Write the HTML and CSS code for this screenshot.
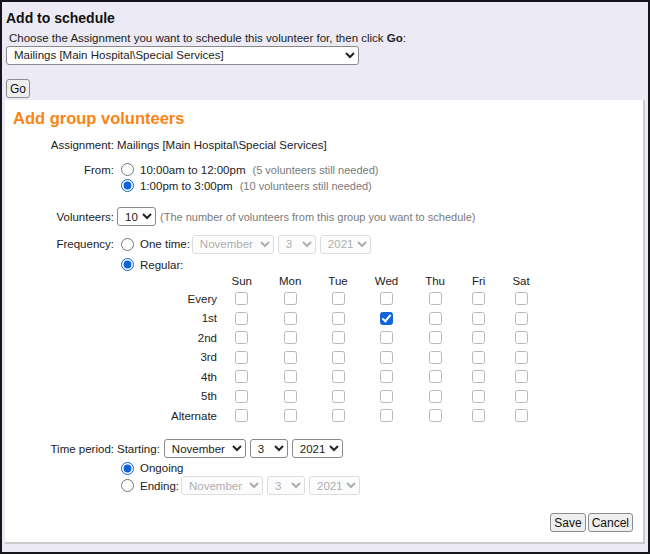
FILE: index.html
```html
<!DOCTYPE html>
<html lang="en">
<head>
    <meta charset="UTF-8">
    <title>Add to schedule</title>
    <link rel="stylesheet" href="styles.css">
</head>
<body>
<div class="frame">
    <!-- Pick the assignment -->
    <div class="top">
        <h1>Add to schedule</h1>
        <p class="intro">Choose the Assignment you want to schedule this volunteer for, then click <b>Go</b>:</p>
        <select class="assign-select"><option>Mailings [Main Hospital\Special Services]</option></select>
        <div class="go-row"><button class="btn">Go</button></div>
    </div>

    <!-- Group volunteers -->
    <div class="panel">
        <h2>Add group volunteers</h2>

        <div class="row row-assign">
            <div class="lbl">Assignment:</div>
            <div class="field">Mailings [Main Hospital\Special Services]</div>
        </div>

        <div class="row row-from">
            <div class="lbl">From:</div>
            <div class="field">
                <label class="opt"><input type="radio" name="shift">10:00am to 12:00pm<span class="hint">(5 volunteers still needed)</span></label>
                <label class="opt"><input type="radio" name="shift" checked>1:00pm to 3:00pm<span class="hint">(10 volunteers still needed)</span></label>
            </div>
        </div>

        <div class="row row-vol">
            <div class="lbl tall">Volunteers:</div>
            <div class="field line">
                <select class="sel-num"><option>10</option></select>
                <span class="hint">(The number of volunteers from this group you want to schedule)</span>
            </div>
        </div>

        <div class="row row-freq">
            <div class="lbl tall">Frequency:</div>
            <div class="field">
                <div class="line">
                    <label class="opt"><input type="radio" name="freq">One time:</label>
                    <select class="sel-month" disabled><option>November</option></select>
                    <select class="sel-day" disabled><option>3</option></select>
                    <select class="sel-year" disabled><option>2021</option></select>
                </div>
                <label class="opt opt-regular"><input type="radio" name="freq" checked>Regular:</label>

                <table class="days">
                    <tr class="head"><td></td><td>Sun</td><td>Mon</td><td>Tue</td><td>Wed</td><td>Thu</td><td>Fri</td><td>Sat</td></tr>
                    <tr><td>Every</td><td><input type="checkbox"></td><td><input type="checkbox"></td><td><input type="checkbox"></td><td><input type="checkbox"></td><td><input type="checkbox"></td><td><input type="checkbox"></td><td><input type="checkbox"></td></tr>
                    <tr><td>1st</td><td><input type="checkbox"></td><td><input type="checkbox"></td><td><input type="checkbox"></td><td><input type="checkbox" checked></td><td><input type="checkbox"></td><td><input type="checkbox"></td><td><input type="checkbox"></td></tr>
                    <tr><td>2nd</td><td><input type="checkbox"></td><td><input type="checkbox"></td><td><input type="checkbox"></td><td><input type="checkbox"></td><td><input type="checkbox"></td><td><input type="checkbox"></td><td><input type="checkbox"></td></tr>
                    <tr><td>3rd</td><td><input type="checkbox"></td><td><input type="checkbox"></td><td><input type="checkbox"></td><td><input type="checkbox"></td><td><input type="checkbox"></td><td><input type="checkbox"></td><td><input type="checkbox"></td></tr>
                    <tr><td>4th</td><td><input type="checkbox"></td><td><input type="checkbox"></td><td><input type="checkbox"></td><td><input type="checkbox"></td><td><input type="checkbox"></td><td><input type="checkbox"></td><td><input type="checkbox"></td></tr>
                    <tr><td>5th</td><td><input type="checkbox"></td><td><input type="checkbox"></td><td><input type="checkbox"></td><td><input type="checkbox"></td><td><input type="checkbox"></td><td><input type="checkbox"></td><td><input type="checkbox"></td></tr>
                    <tr><td>Alternate</td><td><input type="checkbox"></td><td><input type="checkbox"></td><td><input type="checkbox"></td><td><input type="checkbox"></td><td><input type="checkbox"></td><td><input type="checkbox"></td><td><input type="checkbox"></td></tr>
                </table>
            </div>
        </div>

        <div class="row row-period">
            <div class="lbl tall">Time period:</div>
            <div class="field">
                <div class="line">
                    <span class="starting">Starting:</span>
                    <select class="sel-month"><option>November</option></select>
                    <select class="sel-day"><option>3</option></select>
                    <select class="sel-year"><option>2021</option></select>
                </div>
                <label class="opt opt-ongoing"><input type="radio" name="period" checked>Ongoing</label>
                <div class="line">
                    <label class="opt"><input type="radio" name="period">Ending:</label>
                    <select class="sel-month" disabled><option>November</option></select>
                    <select class="sel-day" disabled><option>3</option></select>
                    <select class="sel-year" disabled><option>2021</option></select>
                </div>
            </div>
        </div>

        <div class="actions">
            <button class="btn">Save</button>
            <button class="btn">Cancel</button>
        </div>
    </div>
</div>
</body>
</html>
```

FILE: styles.css
```css
* {
    box-sizing: border-box;
}
body {
    margin: 0;
    font-family: "Liberation Sans", Arial, sans-serif;
    font-size: 11.5px;
    color: #222;
}
.frame {
    height: 554px;
    border: 2px solid #16141d;
    background-color: #eceaf5;
    padding: 0 3px;
    overflow: hidden;
}
.top {
    padding: 8px 0 0 1px;
}
.top h1 {
    margin: 0;
    font-size: 14px;
    line-height: 16px;
    color: #111;
}
.intro {
    margin: 3.5px 0 0 3px;
    line-height: 16px;
    color: #222;
}
select {
    font-family: "Liberation Sans", Arial, sans-serif;
    font-size: 11.5px;
    height: 19px;
    padding: 0 0 0 3px;
    color: #222;
    margin: 0;
    border: 1px solid #8a8a8a;
    border-radius: 3px;
    background-color: #fff;
}
select:disabled {
    color: #8c8c8c;
    border-color: #d0d0d0;
    background-color: #fbfbfb;
}
.assign-select {
    display: block;
    width: 353px;
}
.go-row {
    margin-top: 14.5px;
}
.btn {
    font-family: "Liberation Sans", Arial, sans-serif;
    font-size: 12px;
    height: 19px;
    padding: 0 3px;
    margin: 0;
    color: #111;
    background-color: #efefef;
    border: 1px solid #8d8d8d;
    border-radius: 3px;
}
.panel {
    margin-top: 1.5px;
    background-color: #fff;
    border-right: 2px solid #cbcbcf;
    border-bottom: 2px solid #cbcbcf;
    padding: 9px 0 10px;
}
.panel h2 {
    margin: 0 0 9px 8px;
    font-size: 16.5px;
    line-height: 19px;
    color: #fb8412;
}
.row {
    display: flex;
    align-items: flex-start;
}
.lbl {
    width: 109px;
    text-align: right;
    line-height: 16px;
    color: #222;
}
.lbl.tall {
    line-height: 20px;
}
.field {
    margin-left: 3px;
    line-height: 16px;
}
.line {
    display: flex;
    align-items: center;
    height: 20px;
}
.line select {
    margin-right: 4px;
}
.opt {
    display: flex;
    align-items: center;
    height: 16px;
}
input[type="radio"] {
    width: 13px;
    height: 13px;
    margin: 0 6px 0 4px;
    accent-color: #0f63d6;
}
.hint {
    font-size: 11px;
    color: #7a7a7a;
    margin-left: 7px;
}
.row-vol .hint {
    margin-left: 0;
}
.row-from {
    margin-top: 9px;
}
.row-vol {
    margin-top: 13px;
}
.row-freq {
    margin-top: 7.5px;
}
.row-period {
    margin-top: 13px;
}
.sel-num {
    width: 39px;
}
.sel-month {
    width: 82px;
}
.sel-day {
    width: 38px;
}
.sel-year {
    width: 51px;
}
.line .opt {
    margin-right: 2px;
}
.opt-regular {
    margin-top: 3.5px;
    height: 14px;
}
.starting {
    margin-right: 4px;
}
.opt-ongoing {
    margin-top: 2px;
    height: 15px;
}

/* weekday grid */
.days {
    border-collapse: collapse;
    margin: 1.5px 0 0 52px;
}
.days td {
    padding: 0 13.5px;
    height: 19.5px;
    text-align: center;
    vertical-align: middle;
    line-height: 16px;
}
.days tr.head td {
    height: 16px;
}
.days td:first-child {
    width: 49px;
    padding: 0 1px 0 0;
    text-align: right;
}
.days input[type="checkbox"] {
    appearance: none;
    display: block;
    margin: 0 auto;
    width: 13px;
    height: 13px;
    border: 1px solid #b9b9bd;
    border-radius: 2.5px;
    background-color: #fff;
    position: relative;
}
.days input[type="checkbox"]:checked {
    background-color: #1365d8;
    border-color: #1365d8;
}
.days input[type="checkbox"]:checked::after {
    content: "";
    position: absolute;
    left: 3.5px;
    top: 0.5px;
    width: 3px;
    height: 7px;
    border: solid #fff;
    border-width: 0 2px 2px 0;
    transform: rotate(40deg);
}

.actions {
    display: flex;
    justify-content: flex-end;
    gap: 2px;
    margin: 17.5px 10px 0 0;
}
```
